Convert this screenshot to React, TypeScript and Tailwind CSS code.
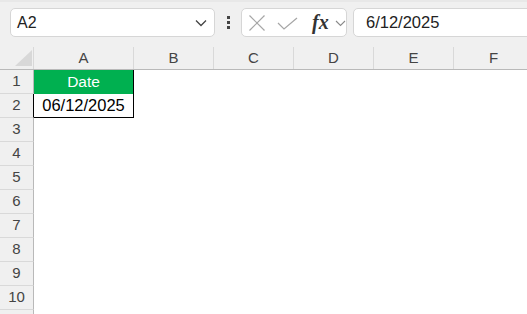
import React from "react";

const cols = ["B", "C", "D", "E", "F"];
const rows = [3, 4, 5, 6, 7, 8, 9, 10];

export default function App() {
  return (
    <div
      className="w-[527px] h-[314px] overflow-hidden bg-white relative"
      style={{ fontFamily: '"Liberation Sans", Arial, sans-serif' }}
    >
      {/* Toolbar */}
      <div className="h-[47px] bg-[#f0f0f0] border-t-2 border-[#e8e8e8] flex items-start pt-[6px] pl-[10px]">
        <div className="w-[205px] h-[29px] shrink-0 bg-white border border-[#d6d6d6] rounded-[5px] flex items-center pl-[6px] pr-[6px]">
          <span className="text-[16px] text-[#222] leading-none flex-1">A2</span>
          <svg width="12" height="8" viewBox="0 0 12 8" className="mr-[1px]">
            <polyline points="1,1.5 6,6.5 11,1.5" fill="none" stroke="#444" strokeWidth="1.3" />
          </svg>
        </div>
        <div className="w-[26px] h-[29px] shrink-0 flex flex-col items-center justify-center gap-[2px] pl-[1px]">
          <div className="w-[3px] h-[3px] bg-[#444]" />
          <div className="w-[3px] h-[3px] bg-[#444]" />
          <div className="w-[3px] h-[3px] bg-[#444]" />
        </div>
        <div className="w-[106px] h-[29px] shrink-0 bg-white border border-[#d6d6d6] rounded-[5px] flex items-center pl-[5px]">
          <svg width="18" height="18" viewBox="0 0 18 18" className="ml-[1px]">
            <line x1="1.5" y1="1.5" x2="16.5" y2="16.5" stroke="#a6a6a6" strokeWidth="1.2" />
            <line x1="16.5" y1="1.5" x2="1.5" y2="16.5" stroke="#a6a6a6" strokeWidth="1.2" />
          </svg>
          <svg width="21" height="13" viewBox="0 0 21 13" className="ml-[11px] mt-[1px]">
            <polyline points="1,6 7,12 20,1" fill="none" stroke="#a6a6a6" strokeWidth="1.2" />
          </svg>
          <span
            className="ml-[14px] text-[20px] italic font-bold text-[#333] leading-none -mt-[2px]"
            style={{ fontFamily: '"Liberation Serif", "Times New Roman", serif' }}
          >
            fx
          </span>
          <svg width="11" height="7" viewBox="0 0 11 7" className="ml-[6px] mt-[2px]">
            <polyline points="1,1 5.5,5.5 10,1" fill="none" stroke="#8a8a8a" strokeWidth="1.1" />
          </svg>
        </div>
        <div className="w-[220px] h-[29px] shrink-0 ml-[6px] bg-white border border-[#d6d6d6] rounded-[5px] flex items-center pl-[12px]">
          <span className="text-[16.5px] text-[#222] leading-none">6/12/2025</span>
        </div>
      </div>

      {/* Column header */}
      <div className="h-[23px] bg-[#f0f0f0] border-b border-[#b9b9b9] flex">
        <div className="w-[34px] shrink-0 border-r border-[#d9d9d9] relative">
          <svg width="18" height="16" viewBox="0 0 18 16" className="absolute left-[15px] top-[3px]">
            <polygon points="17,0 17,16 0,16" fill="#d8d8d8" />
          </svg>
        </div>
        <div className="w-[100px] shrink-0 border-r border-[#d9d9d9] flex items-center justify-center text-[15px] text-[#444]">
          A
        </div>
        {cols.map((c) => (
          <div
            key={c}
            className="w-[80px] shrink-0 border-r border-[#d9d9d9] flex items-center justify-center text-[15px] text-[#444]"
          >
            {c}
          </div>
        ))}
      </div>

      {/* Row 1 */}
      <div className="h-[24px] flex">
        <div className="w-[34px] shrink-0 bg-[#f0f0f0] border-r border-b border-r-[#b9b9b9] border-b-[#d9d9d9] flex items-center justify-center text-[15px] text-[#444]">
          1
        </div>
        <div className="w-[100px] shrink-0 bg-[#00b050] border-r border-black flex items-center justify-center text-[15.5px] text-white">
          Date
        </div>
      </div>

      {/* Row 2 */}
      <div className="h-[24px] flex">
        <div className="w-[34px] shrink-0 bg-[#f0f0f0] border-r border-b border-r-black border-b-[#d9d9d9] flex items-center justify-center text-[15px] text-[#444]">
          2
        </div>
        <div className="w-[100px] shrink-0 border-r border-b border-black flex items-center justify-center text-[16.5px] text-black">
          06/12/2025
        </div>
      </div>

      {rows.map((r) => (
        <div key={r} className="h-[24px] flex">
          <div className="w-[34px] shrink-0 bg-[#f0f0f0] border-r border-b border-r-[#b9b9b9] border-b-[#d9d9d9] flex items-center justify-center text-[15px] text-[#444]">
            {r}
          </div>
        </div>
      ))}
      <div className="h-[24px] flex">
        <div className="w-[34px] shrink-0 bg-[#f0f0f0] border-r border-[#b9b9b9]" />
      </div>
    </div>
  );
}
